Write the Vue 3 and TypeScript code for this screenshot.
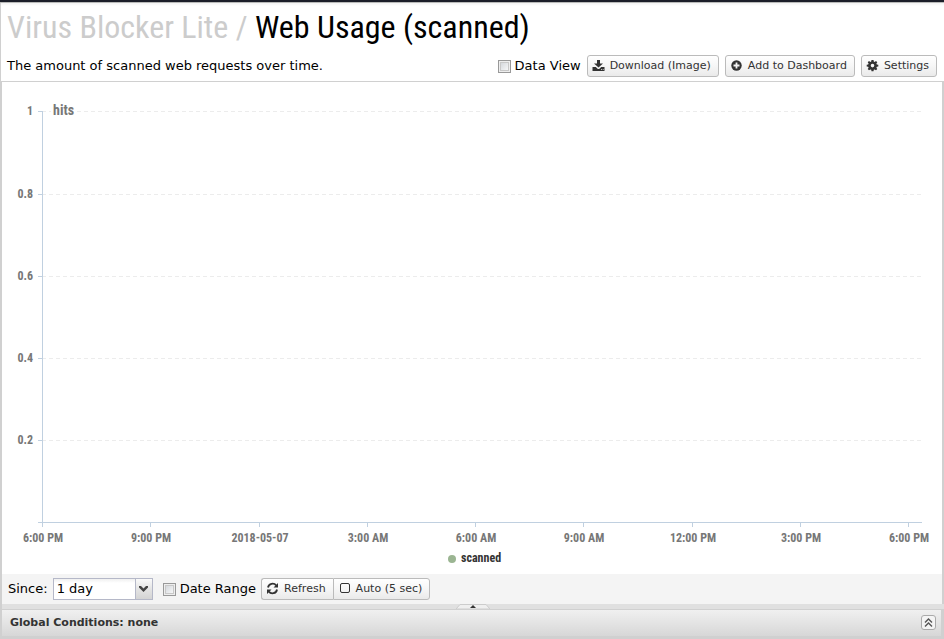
<script setup lang="ts">
import { computed, onBeforeUnmount, onMounted, ref } from 'vue'

const chartBox = ref<HTMLElement | null>(null)
const width = ref(940)
const height = ref(492)

const dataView = ref(false)
const dateRange = ref(false)
const auto = ref(false)
const since = ref('1 day')
const periods: string[] = ['1 hour', '3 hours', '6 hours', '12 hours', '1 day', '2 days', '1 week']

const times: string[] = [
  '6:00 PM', '9:00 PM', '2018-05-07', '3:00 AM', '6:00 AM',
  '9:00 AM', '12:00 PM', '3:00 PM', '6:00 PM',
]
const values: string[] = ['1', '0.8', '0.6', '0.4', '0.2']

const left = 40
const top = 29
const right = computed(() => width.value - 20)
const bottom = computed(() => height.value - 52)

const xTicks = computed(() =>
  times.map((label, i) => ({
    label,
    x: left + Math.round((i * (right.value - left) * 0.9845) / (times.length - 1)),
  })),
)
const yTicks = computed(() =>
  values.map((label, i) => ({
    label,
    y: top + Math.ceil((i * (bottom.value - top)) / values.length),
  })),
)

let observer: ResizeObserver | undefined

function measure(): void {
  if (!chartBox.value) return
  width.value = chartBox.value.clientWidth
  height.value = chartBox.value.clientHeight
}

onMounted(() => {
  measure()
  observer = new ResizeObserver(measure)
  if (chartBox.value) observer.observe(chartBox.value)
})
onBeforeUnmount(() => observer?.disconnect())
</script>

<template>
  <div class="page">
    <div class="strip"></div>
    <header class="head">
      <h1 class="title"><span class="app">Virus Blocker Lite / </span>Web Usage (scanned)</h1>
      <div class="row">
        <p class="desc">The amount of scanned web requests over time.</p>
        <label class="check"><input v-model="dataView" type="checkbox" />Data View</label>
        <button class="btn" type="button">
          <svg class="icon" viewBox="0 0 13 13"><path d="M5 1h3v3.500h3L6.500 8.500 2 4.500h3zM.5 8h3.300l1.500 1.500q1.200 1 2.400 0L9.200 8h3.300v4H.5z" /><path d="M9 10h1v.8H9zM10.700 10h1v.8h-1z" fill="#eee" /></svg>
          Download (Image)
        </button>
        <button class="btn" type="button">
          <svg class="icon" viewBox="0 0 13 13"><circle cx="6.500" cy="6.500" r="5.200" /><path d="M6.500 3.500v6M3.500 6.500h6" stroke="#f4f4f4" stroke-width="1.800" /></svg>
          Add to Dashboard
        </button>
        <button class="btn" type="button">
          <svg class="icon" viewBox="0 0 13 13"><path fill-rule="evenodd" d="M5.500 1h2l.3 1.500.8.400L10 2l1.300 1.300-.9 1.300.4.900 1.500.2v1.800l-1.500.3-.4.900.9 1.300L10 11.300l-1.400-.9-.8.400-.3 1.500h-2l-.3-1.500-.8-.4-1.400.9L1.700 10l.9-1.300-.4-.9L.7 7.500V5.700l1.500-.2.4-.9-.9-1.300L3 2l1.400.9.8-.4zM6.500 4.800a1.800 1.800 0 1 0 0 3.600 1.800 1.800 0 0 0 0-3.600z" /></svg>
          Settings
        </button>
      </div>
    </header>

    <main class="body">
      <div ref="chartBox" class="chart">
        <svg class="plot" :width="width" :height="height" role="img" aria-label="Scanned hits over time">
          <g v-for="t in yTicks" :key="t.label">
            <line class="grid" :x1="left" :x2="right" :y1="t.y + 0.5" :y2="t.y + 0.5" />
            <line class="axis" :x1="left - 4" :x2="left" :y1="t.y + 0.5" :y2="t.y + 0.5" />
            <text class="label" text-anchor="end" :x="left - 9" :y="t.y + 4">{{ t.label }}</text>
          </g>
          <line class="axis" :x1="left + 0.5" :x2="left + 0.5" :y1="top" :y2="bottom" />
          <line class="axis" :x1="left - 4" :x2="right" :y1="bottom + 0.5" :y2="bottom + 0.5" />
          <g v-for="(t, i) in xTicks" :key="i">
            <line class="axis" :x1="t.x + 0.5" :x2="t.x + 0.5" :y1="bottom" :y2="bottom + 5" />
            <text class="label" text-anchor="middle" :x="t.x + 1" :y="bottom + 20">{{ t.label }}</text>
          </g>
          <rect :x="left + 9" :y="top - 7" width="26" height="14" fill="#fff" />
          <text class="unit" :x="left + 11" :y="top + 4">hits</text>
          <circle :cx="width / 2 - 20" :cy="height - 15" r="4" fill="#9bb592" />
          <text class="legend" :x="width / 2 - 11" :y="height - 12">scanned</text>
        </svg>
      </div>

      <div class="tools">
        <label class="since" for="since">Since:</label>
        <div class="combo">
          <select id="since" v-model="since">
            <option v-for="p in periods" :key="p">{{ p }}</option>
          </select>
          <span class="trigger">
            <svg width="9" height="6" viewBox="0 0 9 6"><path d="M0 0h2l2.500 2.500L7 0h2v1.500L4.500 6 0 1.500z" fill="#444" /></svg>
          </span>
        </div>
        <label class="check"><input v-model="dateRange" type="checkbox" />Date Range</label>
        <div class="segments">
          <button class="btn" type="button">
            <svg class="icon" viewBox="0 0 13 13"><path d="M2 5.500C2.700 1.300 8 .4 10.200 3.500M11 7.500c-.7 4.200-6 5.100-8.200 2" fill="none" stroke="#333" stroke-width="1.800" /><path d="M12 1v4.500H7.500zM1 12V7.500h4.500z" /></svg>
            Refresh
          </button>
          <button class="btn" type="button" :aria-pressed="auto" @click="auto = !auto">
            <svg class="box" viewBox="0 0 10 10"><rect x=".5" y=".5" width="9" height="9" rx="1.500" :fill="auto ? '#333' : 'none'" stroke="#333" /></svg>
            Auto (5 sec)
          </button>
        </div>
      </div>
    </main>

    <div class="splitter">
      <svg width="34" height="5" viewBox="0 0 34 5"><path d="M0 5 4 .5h26L34 5z" fill="#efefef" stroke="#ccc" /><path d="M14 4h6L17 1z" fill="#333" /></svg>
    </div>

    <footer class="conditions">
      <span>Global Conditions: none</span>
      <button class="expand" type="button" aria-label="Expand">
        <svg width="9" height="9" viewBox="0 0 9 9"><path d="M1 4.500 4.500 1 8 4.500M1 8.500 4.500 5 8 8.500" fill="none" stroke="#555" stroke-width="1.400" /></svg>
      </button>
    </footer>
  </div>
</template>

<style>
body {
  margin: 0;
  background: #fff;
}
</style>

<style scoped>
.page {
  box-sizing: border-box;
  display: flex;
  flex-direction: column;
  height: 100vh;
  min-height: 320px;
  font: 13px/16px "DejaVu Sans", sans-serif;
  color: #000;
}
.strip {
  flex: none;
  height: 2px;
  background: #1b1e29;
  border-bottom: 1px solid #b9bab9;
}
.head {
  flex: none;
  padding: 2px 7px 4px 6px;
  border-left: 1px solid #d0d0d0;
  border-bottom: 1px solid #d0d0d0;
  background: linear-gradient(#f3f3f3, #fff 3px);
}
.title {
  margin: 0;
  font: 400 32px/44px "Roboto Condensed", "Liberation Sans Narrow", Roboto, sans-serif;
  white-space: nowrap;
}
.app {
  color: #ccc;
}
.row {
  display: flex;
  align-items: center;
  gap: 6px;
  padding-top: 6px;
}
.desc {
  flex: 1;
  margin: 0;
  white-space: nowrap;
}
.check {
  display: flex;
  align-items: center;
  gap: 4px;
  white-space: nowrap;
}
.check input {
  appearance: none;
  box-sizing: border-box;
  width: 13px;
  height: 13px;
  margin: 1px 0 0;
  border: 1px solid #999;
  background: linear-gradient(135deg, #ccd0d5, #fff);
  box-shadow: inset 0 0 0 1px #eee, inset 0 0 0 2px #c8c8c8;
}
.check input:checked {
  background: #555;
}
.btn {
  display: flex;
  align-items: center;
  box-sizing: border-box;
  height: 22px;
  padding: 0 7px 0 4px;
  border: 1px solid #bbb;
  border-radius: 3px;
  background: linear-gradient(#fff, #f6f6f6 50%, #eaeaea);
  color: #333;
  font: 11px/16px "DejaVu Sans", sans-serif;
  white-space: nowrap;
}
.icon {
  width: 13px;
  height: 13px;
  margin: 0 5px 1px 0;
  fill: #333;
}
.box {
  width: 10px;
  height: 10px;
  margin: 0 6px 2px 2px;
}
.body {
  flex: 1;
  min-height: 0;
  display: flex;
  flex-direction: column;
  border: solid #d0d0d0;
  border-width: 0 2px;
}
.chart {
  flex: 1;
  min-height: 0;
  overflow: hidden;
}
.plot {
  display: block;
  font-family: "Roboto Condensed", "Liberation Sans Narrow", Roboto, sans-serif;
  font-weight: 700;
}
.grid {
  stroke: #ececec;
  stroke-dasharray: 4 3;
}
.axis {
  stroke: #c0d0e0;
}
.label {
  fill: #777;
  font-size: 12px;
}
.unit {
  fill: #777;
  font-size: 14px;
}
.legend {
  fill: #333;
  font-size: 12px;
}
.tools {
  flex: none;
  display: flex;
  align-items: center;
  gap: 5px;
  height: 30px;
  padding: 0 6px;
  background: #f4f4f4;
}
.combo {
  position: relative;
  width: 100px;
  margin-right: 5px;
}
.combo select {
  appearance: none;
  display: block;
  box-sizing: border-box;
  width: 100%;
  height: 22px;
  margin: 0;
  padding: 0 20px 0 3px;
  border: 1px solid #b5b8c8;
  border-radius: 0;
  background: linear-gradient(#f0f0f0, #fff 4px);
  color: #000;
  font: 13px/16px "DejaVu Sans", sans-serif;
}
.trigger {
  position: absolute;
  top: 1px;
  right: 1px;
  bottom: 1px;
  display: flex;
  align-items: center;
  justify-content: center;
  width: 16px;
  border-left: 1px solid #b5b8c8;
  background: linear-gradient(#fafafa, #e4e4e4 50%, #d4d4d4);
  pointer-events: none;
}
.segments {
  display: flex;
}
.segments .btn:first-child {
  border-right: 0;
  border-radius: 3px 0 0 3px;
}
.segments .btn:last-child {
  border-radius: 0 3px 3px 0;
}
.splitter {
  flex: none;
  display: flex;
  justify-content: center;
  height: 5px;
  border-left: 2px solid #d0d0d0;
  background: #e0e0e0;
}
.conditions {
  flex: none;
  display: flex;
  align-items: center;
  justify-content: space-between;
  box-sizing: border-box;
  height: 30px;
  padding: 0 5px 1px 8px;
  border: solid #d0d0d0;
  border-width: 1px 3px 3px 2px;
  background: linear-gradient(#f0f0f0, #d7d7d7);
  color: #333;
  font-size: 11px;
  font-weight: 700;
}
.expand {
  display: flex;
  align-items: center;
  justify-content: center;
  box-sizing: border-box;
  width: 15px;
  height: 15px;
  padding: 0;
  border: 1px solid #aaa;
  border-radius: 3px;
  background: #f4f4f4;
}
</style>
